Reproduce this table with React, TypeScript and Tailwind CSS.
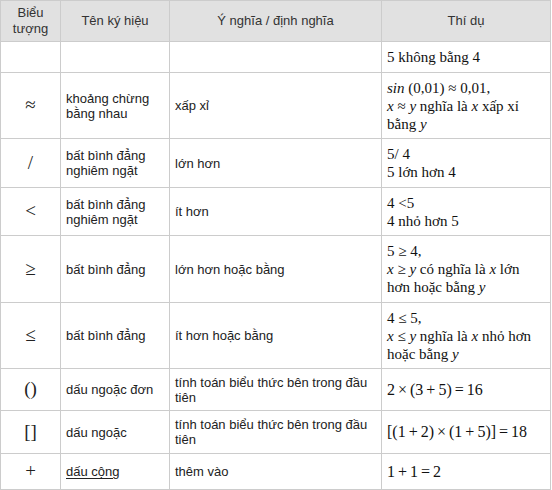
import React from "react";

const sans = "font-['Liberation_Sans',Arial,sans-serif]";
const serif = "font-['Liberation_Serif','Times_New_Roman',serif]";

type Row = {
  h: string;
  sym: React.ReactNode;
  name: React.ReactNode;
  mean: React.ReactNode;
  ex: React.ReactNode;
  big?: boolean;
};

const I = ({ children }: { children: React.ReactNode }) => <i>{children}</i>;

const rows: Row[] = [
  { h: "h-[31px]", sym: "", name: "", mean: "", ex: <>5 không bằng 4</> },
  {
    h: "h-[66px]",
    sym: "≈",
    name: <>khoảng chừng<br />bằng nhau</>,
    mean: "xấp xỉ",
    ex: (
      <>
        <I>sin</I> (0,01) ≈ 0,01,
        <br />
        <I>x</I> ≈ <I>y</I> nghĩa là <I>x</I> xấp xỉ
        <br />
        bằng <I>y</I>
      </>
    ),
  },
  {
    h: "h-[49px]",
    sym: "/",
    name: <>bất bình đẳng<br />nghiêm ngặt</>,
    mean: "lớn hơn",
    ex: <>5/ 4<br />5 lớn hơn 4</>,
  },
  {
    h: "h-[48px]",
    sym: "<",
    name: <>bất bình đẳng<br />nghiêm ngặt</>,
    mean: "ít hơn",
    ex: <>4 &lt;5<br />4 nhỏ hơn 5</>,
  },
  {
    h: "h-[67px]",
    sym: "≥",
    name: "bất bình đẳng",
    mean: "lớn hơn hoặc bằng",
    ex: (
      <>
        5 ≥ 4,
        <br />
        <I>x</I> ≥ <I>y</I> có nghĩa là <I>x</I> lớn
        <br />
        hơn hoặc bằng <I>y</I>
      </>
    ),
  },
  {
    h: "h-[66px]",
    sym: "≤",
    name: "bất bình đẳng",
    mean: "ít hơn hoặc bằng",
    ex: (
      <>
        4 ≤ 5,
        <br />
        <I>x</I> ≤ <I>y</I> nghĩa là <I>x</I> nhỏ hơn
        <br />
        hoặc bằng <I>y</I>
      </>
    ),
  },
  {
    h: "h-[42px]",
    sym: "()",
    name: "dấu ngoặc đơn",
    mean: <>tính toán biểu thức bên trong đầu<br />tiên</>,
    ex: <>2 × (3 + 5) = 16</>,
    big: true,
  },
  {
    h: "h-[43px]",
    sym: "[]",
    name: "dấu ngoặc",
    mean: <>tính toán biểu thức bên trong đầu<br />tiên</>,
    ex: <>[(1 + 2) × (1 + 5)] = 18</>,
    big: true,
  },
  {
    h: "h-[36px]",
    sym: "+",
    name: <span className="underline underline-offset-2">dấu cộng</span>,
    mean: "thêm vào",
    ex: <>1 + 1 = 2</>,
    big: true,
  },
];

const cell = "border-r border-b border-[#cccccc] flex items-center";

export default function App() {
  return (
    <div className="w-[552px] h-[490px] bg-white">
      <div className="w-[551px] border-l border-t border-[#cccccc]">
        <div className={`grid grid-cols-[60px_109px_212px_169px] h-[41px] bg-[#e1e1e1] text-[13px] leading-[16px] text-[#333] ${sans}`}>
          <div className={`${cell} justify-center text-center`}>Biểu<br />tượng</div>
          <div className={`${cell} justify-center`}>Tên ký hiệu</div>
          <div className={`${cell} justify-center`}>Ý nghĩa / định nghĩa</div>
          <div className={`${cell} justify-center`}>Thí dụ</div>
        </div>
        {rows.map((r, i) => (
          <div key={i} className={`grid grid-cols-[60px_109px_212px_169px] ${r.h}`}>
            <div className={`${cell} justify-center text-[19px] text-[#222] ${serif}`}>{r.sym}</div>
            <div className={`${cell} pl-[5px] text-[13px] leading-[15px] text-[#222] ${sans}`}>
              <div>{r.name}</div>
            </div>
            <div className={`${cell} pl-[5px] text-[13px] leading-[15px] text-[#222] ${sans}`}>
              <div>{r.mean}</div>
            </div>
            <div
              className={`${cell} pl-[5px] ${r.big ? "text-[16px] leading-[20px] [word-spacing:-1px]" : "text-[15px] leading-[18px]"} text-[#111] ${serif}`}
            >
              <div>{r.ex}</div>
            </div>
          </div>
        ))}
      </div>
    </div>
  );
}
